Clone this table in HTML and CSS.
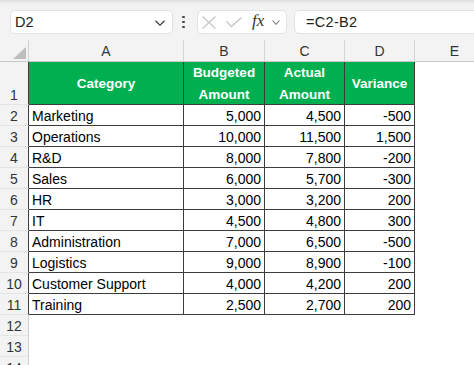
FILE: index.html
```html
<!DOCTYPE html>
<html>
<head>
<meta charset="utf-8">
<link rel="stylesheet" href="styles.css">
</head>
<body>
<div class="toolbar">
  <div class="namebox">
    <span>D2</span>
    <svg class="chev" width="10" height="6" viewBox="0 0 10 6"><polyline points="0.5,0.8 5,5.2 9.5,0.8" fill="none" stroke="#444" stroke-width="1.3"/></svg>
  </div>
  <div class="dots"><i></i><i></i><i></i></div>
  <div class="tools">
    <svg class="xicon" width="14" height="13" viewBox="0 0 14 13"><path d="M0.5 0.5 L13.5 12.5 M13.5 0.5 L0.5 12.5" stroke="#c6c6c6" stroke-width="1.3" fill="none"/></svg>
    <svg class="check" width="16" height="11" viewBox="0 0 16 11"><polyline points="0.5,4.5 5.5,9.5 15.5,0.5" fill="none" stroke="#c6c6c6" stroke-width="1.3"/></svg>
    <span class="fx">fx</span>
    <svg class="chev2" width="8" height="5" viewBox="0 0 8 5"><polyline points="0.5,0.5 4,4.3 7.5,0.5" fill="none" stroke="#777" stroke-width="1.1"/></svg>
  </div>
  <div class="formula">=C2-B2</div>
</div>
<div class="sheet">
  <div class="corner"><span class="tri"></span></div>
  <div class="ch">A</div><div class="ch">B</div><div class="ch">C</div><div class="ch">D</div><div class="ch">E</div>

  <div class="rh in r1">1</div>
  <div class="hd">Category</div>
  <div class="hd">Budgeted<br>Amount</div>
  <div class="hd">Actual<br>Amount</div>
  <div class="hd">Variance</div>
  <div class="e"></div>

  <div class="rh in">2</div><div class="t">Marketing</div><div class="n">5,000</div><div class="n">4,500</div><div class="n">-500</div><div class="e"></div>
  <div class="rh in">3</div><div class="t">Operations</div><div class="n">10,000</div><div class="n">11,500</div><div class="n">1,500</div><div class="e"></div>
  <div class="rh in">4</div><div class="t">R&amp;D</div><div class="n">8,000</div><div class="n">7,800</div><div class="n">-200</div><div class="e"></div>
  <div class="rh in">5</div><div class="t">Sales</div><div class="n">6,000</div><div class="n">5,700</div><div class="n">-300</div><div class="e"></div>
  <div class="rh in">6</div><div class="t">HR</div><div class="n">3,000</div><div class="n">3,200</div><div class="n">200</div><div class="e"></div>
  <div class="rh in">7</div><div class="t">IT</div><div class="n">4,500</div><div class="n">4,800</div><div class="n">300</div><div class="e"></div>
  <div class="rh in">8</div><div class="t">Administration</div><div class="n">7,000</div><div class="n">6,500</div><div class="n">-500</div><div class="e"></div>
  <div class="rh in">9</div><div class="t">Logistics</div><div class="n">9,000</div><div class="n">8,900</div><div class="n">-100</div><div class="e"></div>
  <div class="rh in">10</div><div class="t">Customer Support</div><div class="n">4,000</div><div class="n">4,200</div><div class="n">200</div><div class="e"></div>
  <div class="rh in">11</div><div class="t">Training</div><div class="n">2,500</div><div class="n">2,700</div><div class="n">200</div><div class="e"></div>

  <div class="rh">12</div><div class="e"></div><div class="e"></div><div class="e"></div><div class="e"></div><div class="e"></div>
  <div class="rh">13</div><div class="e"></div><div class="e"></div><div class="e"></div><div class="e"></div><div class="e"></div>
  <div class="rh">14</div><div class="e"></div><div class="e"></div><div class="e"></div><div class="e"></div><div class="e"></div>
</div>
</body>
</html>
```
FILE: styles.css
```css
html, body {
  margin: 0;
  padding: 0;
  background: #ffffff;
  overflow: hidden;
  font-family: "Liberation Sans", Arial, sans-serif;
}

.toolbar {
  height: 40px;
  box-sizing: border-box;
  padding: 10px 0 0 10px;
  display: flex;
  align-items: flex-start;
  background: linear-gradient(#dcdcdc 0, #eeeeee 3px, #f3f3f3 6px);
}

.namebox {
  width: 163px;
  height: 24px;
  box-sizing: border-box;
  background: #fff;
  border: 1px solid #e2e2e2;
  border-radius: 5px;
  display: flex;
  align-items: center;
  justify-content: space-between;
  padding: 0 7px 0 4px;
  font-size: 14.5px;
  color: #222;
}

.chev { display: block; margin-top: 1px; }

.dots {
  width: 3px;
  height: 24px;
  margin: 0 12px 0 9px;
  display: flex;
  flex-direction: column;
  justify-content: center;
  gap: 2.5px;
}
.dots i {
  display: block;
  width: 2.5px;
  height: 2.5px;
  border-radius: 50%;
  background: #444;
}

.tools {
  width: 90px;
  height: 24px;
  box-sizing: border-box;
  background: #fff;
  border: 1px solid #e2e2e2;
  border-radius: 5px;
  display: flex;
  align-items: center;
  padding-left: 4px;
}
.xicon { display: block; margin-right: 10px; }
.check { display: block; margin-right: 10px; margin-top: 1px; }
.fx {
  font-family: "Liberation Serif", "Times New Roman", serif;
  font-style: italic;
  font-size: 17px;
  color: #333;
  margin-right: 8px;
  line-height: 20px;
  margin-top: -2px;
}
.chev2 { display: block; margin-top: 1px; }

.formula {
  flex: 1;
  height: 24px;
  box-sizing: border-box;
  margin-left: 7px;
  margin-right: -12px;
  background: #fff;
  border: 1px solid #e2e2e2;
  border-radius: 5px;
  padding-left: 11px;
  font-size: 14.5px;
  letter-spacing: 0.3px;
  line-height: 22px;
  color: #222;
}

.sheet {
  display: grid;
  grid-template-columns: 29px 155px 81px 80px 70px 80px;
  grid-template-rows: 22px 43px repeat(13, 21px);
  font-size: 14px;
  color: #000;
}
.sheet > div { box-sizing: border-box; overflow: hidden; white-space: nowrap; }

.corner {
  background: #f3f3f3;
  border-right: 1px solid #d4d4d4;
  border-bottom: 1px solid #c8c8c8;
  position: relative;
}
.tri {
  position: absolute;
  left: 13px;
  top: 7px;
  width: 0;
  height: 0;
  border-left: 13px solid transparent;
  border-bottom: 12px solid #bdbdbd;
}

.ch {
  background: #f3f3f3;
  border-right: 1px solid #d4d4d4;
  border-bottom: 1px solid #c8c8c8;
  text-align: center;
  line-height: 22px;
  color: #333;
}

.rh {
  background: #f3f3f3;
  border-right: 1px solid #d0d0d0;
  border-bottom: 1px solid #e4e4e4;
  text-align: center;
  color: #333;
  padding-top: 1px;
  line-height: 20px;
}
.rh.in { border-right-color: #3c3c3c; }
.rh.r1 {
  display: flex;
  align-items: flex-end;
  justify-content: center;
  line-height: 18px;
  padding-top: 0;
}

.hd {
  background: #00b050;
  color: #fff;
  font-weight: bold;
  font-size: 13.5px;
  border-right: 1px solid #3c3c3c;
  border-bottom: 1px solid #3c3c3c;
  display: flex;
  align-items: center;
  justify-content: center;
  text-align: center;
  line-height: 22px;
  padding-top: 2px;
  overflow: visible !important;
}

.t, .n {
  border-right: 1px solid #3c3c3c;
  border-bottom: 1px solid #3c3c3c;
  padding-top: 1px;
  line-height: 20px;
}
.t { padding-left: 3px; }
.n { text-align: right; padding-right: 3px; }

.e { background: #fff; }
```
